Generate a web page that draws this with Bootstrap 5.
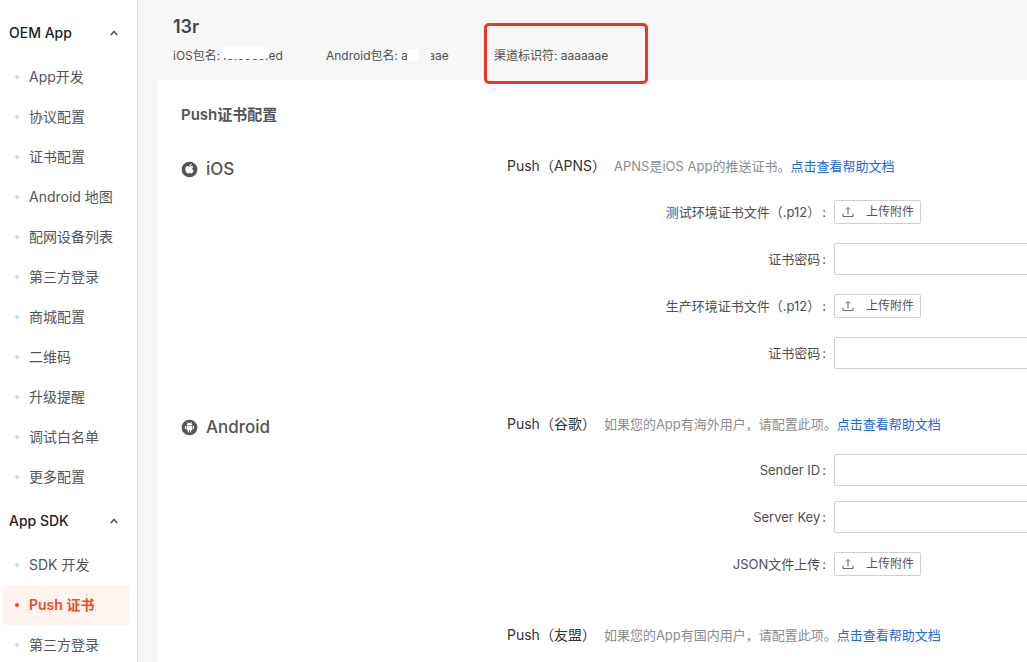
<!DOCTYPE html>
<html lang="zh-CN">
<head>
<meta charset="utf-8">
<meta name="viewport" content="width=device-width, initial-scale=1">
<title>Push证书配置</title>
<link href="https://cdn.jsdelivr.net/npm/bootstrap@5.3.0/dist/css/bootstrap.min.css" rel="stylesheet">
<style>
  body { font-family: Inter, "Noto Sans CJK SC", sans-serif; font-size: 13px; line-height: 24px; color: #4f4f4f; background: #f7f7f7; }
  a { text-decoration: none; }

  .side { width: 138px; border-right: 1px solid #dedede; padding: 9px 8px 0 3px; }
  .side-group { height: 48px; padding: 0 11px 0 6px; border: 0; background: none; font-size: 14px; font-weight: 500; color: #222; }
  .side-link { height: 40px; padding-left: 12px; gap: 10px; font-size: 14px; color: #555; border-radius: 3px; white-space: nowrap; }
  .side-link::before { content: ""; width: 4px; height: 4px; border-radius: 50%; background: #d8d8d8; }
  .side-link.active { background: #fff4f0; color: #f04a1d; font-weight: 600; }
  .side-link.active::before { background: #f04a1d; }

  .app-head { height: 80px; padding: 15px 0 0 35px; }
  .app-name { font-size: 18px; line-height: 24px; font-weight: 600; color: #444; }
  .app-meta { font-size: 12px; line-height: 24px; margin-top: 5px; white-space: nowrap; }
  .meta-ios { width: 153px; }
  .meta-android { width: 168px; }
  .redact { position: absolute; background: #fff; }
  .redact-ios { left: 49px; top: 2px; width: 47px; height: 13px; border-radius: 6px; }
  .redact-android { left: 81px; top: 5px; width: 12px; height: 12px; border-radius: 2px; }
  .redact-soft { left: 92px; top: 5px; width: 13px; height: 13px; background: #f7f7f7; }
  .callout { position: absolute; left: -10px; top: -21px; width: 164px; height: 61px; border: 3px solid #ee3423; border-radius: 5px; }

  .panel { margin-left: 19px; padding: 22px 0 0 24px; border-radius: 4px 0 0 0; }
  .panel-title { margin-bottom: 26px; font-size: 15px; line-height: 26px; font-weight: 600; color: #555; }
  .platform { flex: 0 0 326px; gap: 8px; font-size: 17px; line-height: 30px; font-weight: 500; color: #555; }
  .push-block { margin-bottom: 43px; }
  .push-title { margin-bottom: 18px; white-space: nowrap; }
  .push-name { font-size: 14px; color: #333; font-weight: 400; line-height: 24px; }
  .hint { color: #8c8c8c; }
  .hint a { color: #1a66e8; }
  .field { height: 32px; margin-bottom: 15px; }
  .field:last-child { margin-bottom: 0; }
  .field-label { flex: 0 0 319px; margin-right: 8px; text-align: right; white-space: nowrap; }
  .field-label::after { content: ":"; margin-left: 2px; }
  .field-input { flex: 0 0 400px; height: 32px; border: 1px solid #d0d0d0; border-radius: 2px; font-size: 13px; }
  .upload { height: 24px; padding: 0 6px 0 7px; gap: 12px; border: 1px solid #d0d0d0; border-radius: 2px; background: #fff; color: #555; font-size: 12px; line-height: 22px; }
</style>
</head>
<body>
<div class="d-flex vh-100 overflow-hidden">
  <nav class="side bg-white flex-shrink-0 overflow-hidden" aria-label="主菜单">
    <button type="button" class="side-group w-100 d-flex align-items-center justify-content-between">OEM App
      <svg width="8" height="6" viewBox="0 0 8 6" fill="none" stroke="#555" stroke-width="1.6" aria-hidden="true"><path d="M.8 5 4 1.5 7.2 5"/></svg></button>
    <a href="#" class="side-link d-flex align-items-center">App开发</a>
    <a href="#" class="side-link d-flex align-items-center">协议配置</a>
    <a href="#" class="side-link d-flex align-items-center">证书配置</a>
    <a href="#" class="side-link d-flex align-items-center">Android 地图</a>
    <a href="#" class="side-link d-flex align-items-center">配网设备列表</a>
    <a href="#" class="side-link d-flex align-items-center">第三方登录</a>
    <a href="#" class="side-link d-flex align-items-center">商城配置</a>
    <a href="#" class="side-link d-flex align-items-center">二维码</a>
    <a href="#" class="side-link d-flex align-items-center">升级提醒</a>
    <a href="#" class="side-link d-flex align-items-center">调试白名单</a>
    <a href="#" class="side-link d-flex align-items-center">更多配置</a>
    <button type="button" class="side-group w-100 d-flex align-items-center justify-content-between">App SDK
      <svg width="8" height="6" viewBox="0 0 8 6" fill="none" stroke="#555" stroke-width="1.6" aria-hidden="true"><path d="M.8 5 4 1.5 7.2 5"/></svg></button>
    <a href="#" class="side-link d-flex align-items-center">SDK 开发</a>
    <a href="#" class="side-link active d-flex align-items-center" aria-current="page">Push 证书</a>
    <a href="#" class="side-link d-flex align-items-center">第三方登录</a>
  </nav>

  <main class="flex-grow-1 overflow-hidden d-flex flex-column">
    <header class="app-head flex-shrink-0">
      <h1 class="app-name mb-0">13r</h1>
      <div class="app-meta d-flex">
        <div class="meta-ios position-relative">iOS包名: io.occc.ed<span class="redact redact-ios"></span></div>
        <div class="meta-android position-relative">Android包名: aaaaaae<span class="redact redact-soft"></span><span class="redact redact-android"></span></div>
        <div class="position-relative">渠道标识符: aaaaaae<span class="callout"></span></div>
      </div>
    </header>

    <div class="panel bg-white flex-grow-1">
      <h2 class="panel-title">Push证书配置</h2>

      <section class="d-flex align-items-start">
        <h3 class="platform d-flex align-items-center mb-0">
          <svg width="17" height="17" viewBox="0 0 16 16" aria-hidden="true"><circle cx="8" cy="8" r="7.4" fill="#555"/><path fill="#fff" d="M8.1 5.4c.5 0 1-.6 1.900-.6.7 0 1.300.4 1.600.8-1.500.9-1.200 3 .3 3.600-.4 1.200-1.300 2.500-2.200 2.500-.6 0-.9-.4-1.600-.4s-1 .4-1.600.4c-1.200 0-2.500-2.200-2.500-4.100 0-1.800 1.100-2.800 2.200-2.800.8 0 1.400.6 1.900.6zM8 4.800c0-1.200.9-2.100 1.900-2.200.1 1.200-.8 2.200-1.900 2.200z"/></svg>
          iOS</h3>
        <div class="push-block">
          <div class="push-title d-flex gap-2"><h4 class="push-name mb-0">Push（APNS）</h4><span class="hint">APNS是iOS App的推送证书。<a href="#">点击查看帮助文档</a></span></div>
          <div class="field d-flex align-items-center">
            <label class="field-label" for="dev-file">测试环境证书文件（.p12）</label>
            <button type="button" id="dev-file" class="upload d-flex align-items-center flex-shrink-0"><svg width="12" height="12" viewBox="0 0 12 12" fill="none" stroke="#666" aria-hidden="true"><path d="M1 7.500v3h10v-3M6 8.500v-7M4 3.500l2-2 2 2"/></svg><span>上传附件</span></button>
          </div>
          <div class="field d-flex align-items-center">
            <label class="field-label" for="dev-pass">证书密码</label>
            <input type="password" id="dev-pass" class="field-input px-2">
          </div>
          <div class="field d-flex align-items-center">
            <label class="field-label" for="prod-file">生产环境证书文件（.p12）</label>
            <button type="button" id="prod-file" class="upload d-flex align-items-center flex-shrink-0"><svg width="12" height="12" viewBox="0 0 12 12" fill="none" stroke="#666" aria-hidden="true"><path d="M1 7.500v3h10v-3M6 8.500v-7M4 3.500l2-2 2 2"/></svg><span>上传附件</span></button>
          </div>
          <div class="field d-flex align-items-center">
            <label class="field-label" for="prod-pass">证书密码</label>
            <input type="password" id="prod-pass" class="field-input px-2">
          </div>
        </div>
      </section>

      <section class="d-flex align-items-start">
        <h3 class="platform d-flex align-items-center mb-0">
          <svg width="17" height="17" viewBox="0 0 16 16" aria-hidden="true"><circle cx="8" cy="8" r="7.400" fill="#555"/><path fill="#fff" d="M5.300 6a2.700 2.400 0 0 1 5.400 0zM5.300 6.500h5.400v4.200H9.600v2H8.500v-2h-1v2H6.400v-2H5.300zM3.700 6.500h1v3h-1zM11.300 6.500h1v3h-1z"/><path stroke="#fff" stroke-width=".6" d="m5.800 2.800.8 1.300M10.200 2.800l-.8 1.300"/></svg>
          Android</h3>
        <div>
          <div class="push-block">
            <div class="push-title d-flex gap-2"><h4 class="push-name mb-0">Push（谷歌）</h4><span class="hint">如果您的App有海外用户，请配置此项。<a href="#">点击查看帮助文档</a></span></div>
            <div class="field d-flex align-items-center">
              <label class="field-label" for="sender">Sender ID</label>
              <input type="text" id="sender" class="field-input px-2">
            </div>
            <div class="field d-flex align-items-center">
              <label class="field-label" for="server">Server Key</label>
              <input type="text" id="server" class="field-input px-2">
            </div>
            <div class="field d-flex align-items-center">
              <label class="field-label" for="json">JSON文件上传</label>
              <button type="button" id="json" class="upload d-flex align-items-center flex-shrink-0"><svg width="12" height="12" viewBox="0 0 12 12" fill="none" stroke="#666" aria-hidden="true"><path d="M1 7.500v3h10v-3M6 8.500v-7M4 3.500l2-2 2 2"/></svg><span>上传附件</span></button>
            </div>
          </div>
          <div class="push-title d-flex gap-2 mb-0"><h4 class="push-name mb-0">Push（友盟）</h4><span class="hint">如果您的App有国内用户，请配置此项。<a href="#">点击查看帮助文档</a></span></div>
        </div>
      </section>
    </div>
  </main>
</div>
<script src="https://cdn.jsdelivr.net/npm/bootstrap@5.3.0/dist/js/bootstrap.bundle.min.js"></script>
</body>
</html>
